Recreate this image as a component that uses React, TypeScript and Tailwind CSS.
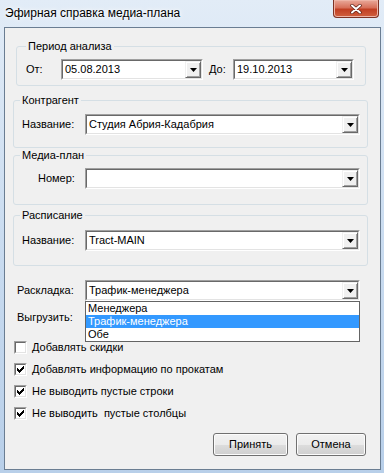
import React from "react";

function DropArrow() {
  return (
    <div className="flex h-full w-[16px] shrink-0 items-center justify-center border border-t-[#f0f0f0] border-l-[#f0f0f0] border-r-[#696969] border-b-[#696969] bg-[#f0f0f0] shadow-[inset_1px_1px_0_#fff,inset_-1px_-1px_0_#a0a0a0]">
      <svg width="7" height="4" viewBox="0 0 7 4">
        <path d="M0 0h7L3.5 4z" fill="#000" />
      </svg>
    </div>
  );
}

function Combo({ value, className }: { value?: string; className: string }) {
  return (
    <div
      className={`flex h-[21px] border border-t-[#a0a0a0] border-l-[#a0a0a0] border-r-white border-b-white ${className}`}
    >
      <div className="flex flex-1 items-stretch border border-t-[#696969] border-l-[#696969] border-r-[#e3e3e3] border-b-[#e3e3e3] bg-white">
        <span className="flex flex-1 items-center pl-[2px] leading-[13px]">{value}</span>
        <DropArrow />
      </div>
    </div>
  );
}

function Group({
  title,
  className,
  legendClass,
  children,
}: {
  title: string;
  className: string;
  legendClass: string;
  children: React.ReactNode;
}) {
  return (
    <fieldset className={`rounded-[3px] border border-[#d5dfe5] ${className}`}>
      <legend className={`px-[2px] leading-[13px] ${legendClass}`}>{title}</legend>
      {children}
    </fieldset>
  );
}

function Check({ checked, label }: { checked: boolean; label: string }) {
  return (
    <label className="flex h-[13px] items-center">
      <span className="ml-[9px] flex h-[13px] w-[13px] border border-t-[#a0a0a0] border-l-[#a0a0a0] border-r-white border-b-white">
        <span className="flex flex-1 items-center justify-center border border-t-[#696969] border-l-[#696969] border-r-[#e3e3e3] border-b-[#e3e3e3] bg-white">
          {checked && (
            <svg width="9" height="9" viewBox="0 0 9 9">
              <path d="M1.5 3.5 3.5 5.5 7.5 1.5M1.5 4.5 3.5 6.5 7.5 2.5M1.5 5.5 3.5 7.5 7.5 3.5" stroke="#000" strokeWidth="1" fill="none" shapeRendering="crispEdges" />
            </svg>
          )}
        </span>
      </span>
      <span className="ml-[5px] whitespace-pre leading-[13px]">{label}</span>
    </label>
  );
}

function Button({ children, className }: { children: React.ReactNode; className: string }) {
  return (
    <button
      className={`h-[23px] rounded-[3px] border border-[#707070] bg-[linear-gradient(#f2f2f2,#ebebeb_50%,#dddddd_50%,#cfcfcf)] text-[11px] leading-[13px] text-black shadow-[inset_0_0_0_1px_#fcfcfc] ${className}`}
    >
      {children}
    </button>
  );
}

export default function App() {
  return (
    <div className="flex h-[473px] w-[384px] flex-col overflow-hidden bg-linear-to-b from-[#e2ecf7] via-[#cadcf0] to-[#b8cfe9] font-['Liberation_Sans',Arial,sans-serif] text-[11px] text-black">
      {/* title bar */}
      <div className="flex h-[27px] shrink-0 items-start">
        <span className="pl-[5px] pt-[6px] text-[12px] leading-[15px] [text-shadow:0_0_6px_#fff,0_0_3px_#fff]">
          Эфирная справка медиа-плана
        </span>
        <div className="ml-auto mr-[5px] flex h-[18px] w-[46px] items-center justify-center rounded-b-[4px] border border-t-0 border-[#7d3224] bg-[linear-gradient(#e9a99a,#d7705a_45%,#c13f23_55%,#d0603f)] shadow-[inset_0_0_0_1px_#eeb4a6]">
          <svg width="12" height="10" viewBox="0 0 12 10">
            <path d="M2 1.5 10 8.5M10 1.5 2 8.5" stroke="#5a1e14" strokeWidth="3.4" strokeLinecap="round" />
            <path d="M2 1.5 10 8.5M10 1.5 2 8.5" stroke="#fff" strokeWidth="2" strokeLinecap="round" />
          </svg>
        </div>
      </div>

      {/* client area */}
      <div className="ml-[4px] flex h-[443px] w-[377px] flex-col border border-[#6a7d92] bg-[#f0f0f0]">
        <Group title="Период анализа" className="ml-[11px] mt-[12px] w-[350px] pb-[5px]" legendClass="ml-[9px]">
          <div className="mt-[6px] flex items-center pl-[9px]">
            <span className="w-[35px]">От:</span>
            <Combo value="05.08.2013" className="w-[142px]" />
            <span className="ml-[6px] w-[24px]">До:</span>
            <Combo value="19.10.2013" className="w-[121px]" />
          </div>
        </Group>

        <Group title="Контрагент" className="ml-[8px] mt-[8px] w-[355px] pb-[12px]" legendClass="ml-[6px]">
          <div className="mt-[7px] flex items-center pl-[8px]">
            <span className="w-[63px]">Название:</span>
            <Combo value="Студия Абрия-Кадабрия" className="w-[275px]" />
          </div>
        </Group>

        <Group title="Медиа-план" className="ml-[8px] mt-[1px] w-[355px] pb-[15px]" legendClass="ml-[6px]">
          <div className="mt-[6px] flex items-center pl-[24px]">
            <span className="w-[47px]">Номер:</span>
            <Combo className="w-[275px]" />
          </div>
        </Group>

        <Group title="Расписание" className="ml-[8px] mt-[4px] w-[355px] pb-[14px]" legendClass="ml-[6px]">
          <div className="mt-[8px] flex items-center pl-[8px]">
            <span className="w-[63px]">Название:</span>
            <Combo value="Tract-MAIN" className="w-[275px]" />
          </div>
        </Group>

        <div className="ml-[12px] mt-[14px] flex items-center">
          <span className="w-[68px]">Раскладка:</span>
          <div className="relative z-10">
            <Combo value="Трафик-менеджера" className="w-[275px]" />
            <ul className="absolute left-0 top-full w-[275px] border border-[#646464] bg-white">
              <li className="h-[13px] pl-[2px] leading-[13px]">Менеджера</li>
              <li className="h-[13px] bg-[#3399ff] pl-[2px] leading-[13px] text-white">Трафик-менеджера</li>
              <li className="h-[13px] pl-[2px] leading-[13px]">Обе</li>
            </ul>
          </div>
        </div>

        <div className="ml-[12px] mt-[6px] flex items-center">
          <span className="w-[68px]">Выгрузить:</span>
          <Combo value="" className="w-[275px]" />
        </div>

        <div className="mt-[13px] flex flex-col gap-[9px]">
          <Check checked={false} label="Добавлять скидки" />
          <Check checked label="Добавлять информацию по прокатам" />
          <Check checked label="Не выводить пустые строки" />
          <Check checked label="Не выводить  пустые столбцы" />
        </div>

        <div className="mt-[13px] flex justify-end gap-[8px] pr-[14px]">
          <Button className="w-[75px]">Принять</Button>
          <Button className="w-[70px]">Отмена</Button>
        </div>
      </div>
    </div>
  );
}
